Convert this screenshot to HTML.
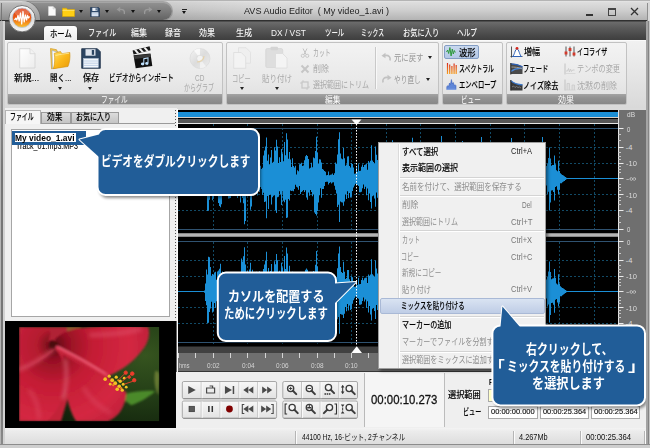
<!DOCTYPE html>
<html lang="ja">
<head>
<meta charset="utf-8">
<title>AVS Audio Editor</title>
<style>
*{box-sizing:border-box;margin:0;padding:0}
html,body{width:650px;height:448px;overflow:hidden;background:#cfcfcf}
body{font-family:"Liberation Sans","Noto Sans CJK JP",sans-serif;font-size:9px;color:#000;position:relative}
.t{position:absolute;white-space:pre;transform-origin:0 50%;display:block}
.a{position:absolute}
#win{position:absolute;left:0;top:0;width:650px;height:448px;background:#dadada;overflow:hidden}
#title{overflow:hidden;position:absolute;left:0;top:0;width:650px;height:21px;background:linear-gradient(90deg,rgba(0,0,0,.25),rgba(0,0,0,.2) 36px,rgba(0,0,0,.06) 175px,rgba(0,0,0,0) 260px),linear-gradient(#f0f0f0 0,#dedede 2px,#cfcfcf 10px,#b3b3b3 20px)}
#qat{position:absolute;left:24px;top:2px;width:148px;height:18px;border-radius:0 9px 9px 0;background:linear-gradient(#939393,#7e7e7e 45%,#626262);box-shadow:inset 0 1px 0 #a5a5a5,0 0 0 1px rgba(120,120,120,.5)}
#tabs{position:absolute;left:0;top:20px;width:650px;height:20px;background:linear-gradient(#303030 0,#303030 1px,#6c6c6c 2px,#5a5a5a 8px,#404040 19px)}
#hometab{position:absolute;left:44px;top:26px;width:33px;height:15px;background:linear-gradient(#fdfdfd,#ededed);border-radius:3px 3px 0 0;box-shadow:0 0 1px #222}
#ribbon{position:absolute;left:4px;top:40px;width:643px;height:68px;background:linear-gradient(#f1f1f1,#e3e3e3 60%,#d9d9d9);border-top:1px solid #fafafa}
.grp{position:absolute;top:42px;height:63px;border:1px solid #c2c2c2;border-radius:2px;background:linear-gradient(#f3f3f3,#e9e9e9 60%,#dedede);overflow:hidden}
.grp .lab{position:absolute;left:0;right:0;bottom:0;height:9.700px;background:linear-gradient(#a4a4a4,#929292 40%,#878787)}
.arr{position:absolute;width:0;height:0;border-left:2.5px solid transparent;border-right:2.5px solid transparent;border-top:3px solid #222}
</style>
</head>
<body>
<div id="win">
<div id="title"><div id="qat"></div><i class="a" style="left:4px;top:.5px;width:36px;height:36px;border-radius:50%;background:linear-gradient(#d0d0d0 0,#c0c0c0 3px,#9a9a9a 20px);box-shadow:0 0 0 .7px rgba(90,90,90,.5)"></i><i class="a" style="left:0;top:0;width:22px;height:21px;background:linear-gradient(#e6e6e6 0,#cfcfcf 2px,#bdbdbd 3px,#8c8c8c 20px)"></i></div>
<div id="tabs"></div>
<svg class="a" style="left:8px;top:4px" width="28" height="28" viewBox="0 0 28 28">
<defs><linearGradient id="lg1" x1="0" y1="0" x2="0" y2="1"><stop offset="0" stop-color="#dc3a14"/><stop offset=".5" stop-color="#ea5a14"/><stop offset=".8" stop-color="#f59a20"/><stop offset="1" stop-color="#fbc02c"/></linearGradient>
<linearGradient id="lg2" x1="0" y1="0" x2="0" y2="1"><stop offset="0" stop-color="#ffffff"/><stop offset=".5" stop-color="#dcdcdc"/><stop offset="1" stop-color="#f4f4f4"/></linearGradient></defs>
<circle cx="14.100" cy="14.700" r="13.200" fill="url(#lg2)" stroke="#666" stroke-width=".9"/>
<circle cx="14.050" cy="13.800" r="9.700" fill="url(#lg1)" stroke="#b4c6da" stroke-width=".8"/>
<ellipse cx="14" cy="8.500" rx="7.500" ry="4" fill="#fff" opacity=".2"/>
<path d="M6.500 16l1.300-1.800 1 1.800 1.200-4.500 1.200 5.500 1.300-8 1.200 11 1.300-12.500 1.200 10.500 1.200-7 1.200 5 1-4.500 1 2.500 1-1.500" fill="none" stroke="#fff" stroke-width="1.250" stroke-linejoin="round"/>
</svg>
<svg class="a" style="left:48px;top:6px" width="8" height="10" viewBox="0 0 8 10"><path d="M.5 .5h4.5l2.5 2.5v6.5h-7z" fill="#fbfbfb" stroke="#d8d8d8" stroke-width=".6"/><path d="M5 .5v2.5h2.5" fill="#e2e2e2" stroke="#ccc" stroke-width=".5"/></svg>
<svg class="a" style="left:62px;top:7px" width="13" height="10" viewBox="0 0 13 10"><path d="M.5 1.2h4l1 1.3h7v7h-12z" fill="#ffcf14" stroke="#d9a400" stroke-width=".6"/><path d="M.5 3.4h12" stroke="#ffe77a" stroke-width=".8"/></svg>
<svg class="a" style="left:90px;top:7px" width="10" height="10" viewBox="0 0 10 10"><path d="M.5 .5h8l1 1v8h-9z" fill="#2f4a6b" stroke="#1d3350" stroke-width=".6"/><rect x="2.3" y=".8" width="5" height="3.2" fill="#e9eef5"/><rect x="5.6" y="1.2" width="1.1" height="2.3" fill="#2f4a6b"/><rect x="1.6" y="5.3" width="6.8" height="4" fill="#eaf1fa"/><path d="M2 6.6h6M2 8h6" stroke="#9db6d6" stroke-width=".5"/></svg>
<i class="arr" style="left:79.0px;top:10.1px;border-top-color:#111"></i>
<i class="arr" style="left:105.0px;top:10.1px;border-top-color:#111"></i>
<i class="arr" style="left:131.0px;top:10.1px;border-top-color:#111"></i>
<i class="arr" style="left:157.2px;top:10.1px;border-top-color:#111"></i>
<svg class="a" style="left:116px;top:6px" width="10" height="9" viewBox="0 0 10 9"><path d="M8.300 8c.7-3.200-1-5-4.500-4.600" fill="none" stroke="#9a9a9a" stroke-width="1.400"/><path d="M.6 3.500l3.600-2.700v5.200z" fill="#9a9a9a"/></svg>
<svg class="a" style="left:143px;top:6px" width="10" height="9" viewBox="0 0 10 9"><path d="M1.700 8c-.7-3.200 1-5 4.500-4.600" fill="none" stroke="#9a9a9a" stroke-width="1.400"/><path d="M9.400 3.500l-3.600-2.700v5.200z" fill="#9a9a9a"/></svg>
<i class="a" style="left:182px;top:9px;width:5px;height:1px;background:#222"></i>
<i class="arr" style="left:182.0px;top:10.7px;border-top-color:#111"></i>
<span class="t" style="left:243.6px;top:5.3px;font-size:9.5px;line-height:12px;color:#1c1c1c;transform:scaleX(0.952);">AVS Audio Editor  ( My video_1.avi )</span>
<i class="a" style="left:586px;top:14px;width:7px;height:2px;background:#333"></i>
<i class="a" style="left:608px;top:8px;width:8px;height:8px;border:1px solid #444;border-top-width:2px"></i>
<svg class="a" style="left:630px;top:7px" width="9" height="9" viewBox="0 0 9 9"><path d="M1 1l7 7M8 1l-7 7" stroke="#333" stroke-width="1.3"/></svg>
<div id="hometab"></div>
<span class="t" style="left:49.5px;top:27.5px;font-size:9px;line-height:12px;color:#000;font-weight:500;transform:scaleX(0.815);-webkit-text-stroke:.1px #000;">ホーム</span>
<span class="t" style="left:88.2px;top:27.3px;font-size:9px;line-height:12px;color:#f4f4f4;font-weight:500;transform:scaleX(0.786);">ファイル</span>
<span class="t" style="left:131.0px;top:27.3px;font-size:9px;line-height:12px;color:#f4f4f4;font-weight:500;transform:scaleX(0.889);">編集</span>
<span class="t" style="left:165.0px;top:27.3px;font-size:9px;line-height:12px;color:#f4f4f4;font-weight:500;transform:scaleX(0.889);">録音</span>
<span class="t" style="left:199.0px;top:27.3px;font-size:9px;line-height:12px;color:#f4f4f4;font-weight:500;transform:scaleX(0.889);">効果</span>
<span class="t" style="left:235.8px;top:27.3px;font-size:9px;line-height:12px;color:#f4f4f4;font-weight:500;transform:scaleX(0.900);">生成</span>
<span class="t" style="left:271.0px;top:27.3px;font-size:9px;line-height:12px;color:#f4f4f4;font-weight:500;transform:scaleX(0.931);">DX / VST</span>
<span class="t" style="left:324.8px;top:27.3px;font-size:9px;line-height:12px;color:#f4f4f4;font-weight:500;transform:scaleX(0.711);">ツール</span>
<span class="t" style="left:361.4px;top:27.3px;font-size:9px;line-height:12px;color:#f4f4f4;font-weight:500;transform:scaleX(0.643);">ミックス</span>
<span class="t" style="left:402.5px;top:27.3px;font-size:9px;line-height:12px;color:#f4f4f4;font-weight:500;transform:scaleX(0.807);">お気に入り</span>
<span class="t" style="left:457.0px;top:27.3px;font-size:9px;line-height:12px;color:#f4f4f4;font-weight:500;transform:scaleX(0.741);">ヘルプ</span>
<div id="ribbon"></div>
<div class="grp" style="left:7px;width:216px"><div class="lab"></div></div>
<div class="grp" style="left:226px;width:213px"><div class="lab"></div></div>
<div class="grp" style="left:442px;width:61px"><div class="lab"></div></div>
<div class="grp" style="left:506px;width:121px"><div class="lab"></div></div>
<span class="t" style="left:101.3px;top:93.5px;font-size:9px;line-height:12px;color:#fff;transform:scaleX(0.743);">ファイル</span>
<span class="t" style="left:324.5px;top:93.5px;font-size:9px;line-height:12px;color:#fff;transform:scaleX(0.861);">編集</span>
<span class="t" style="left:461.3px;top:93.5px;font-size:9px;line-height:12px;color:#fff;transform:scaleX(0.731);">ビュー</span>
<span class="t" style="left:558.0px;top:93.5px;font-size:9px;line-height:12px;color:#fff;transform:scaleX(0.889);">効果</span>
<svg class="a" style="left:19px;top:48px" width="17" height="21" viewBox="0 0 17 21"><defs><linearGradient id="pg" x1="0" y1="0" x2="1" y2="1"><stop offset="0" stop-color="#fff"/><stop offset="1" stop-color="#ececec"/></linearGradient></defs>
<path d="M.7 .7h10.300l5 5v14.300h-15.300z" fill="url(#pg)" stroke="#d2d2d2" stroke-width=".8"/><path d="M11 .7v5h5" fill="#f2f2f2" stroke="#d2d2d2" stroke-width=".7"/></svg>
<span class="t" style="left:14.4px;top:71.8px;font-size:9px;line-height:12px;color:#000;font-weight:500;transform:scaleX(0.984);-webkit-text-stroke:.1px #000;">新規...</span>
<svg class="a" style="left:49px;top:47px" width="22" height="23" viewBox="0 0 22 23"><defs><linearGradient id="fo" x1="0" y1="0" x2="1" y2="1"><stop offset="0" stop-color="#ffe066"/><stop offset=".5" stop-color="#fbb81a"/><stop offset="1" stop-color="#e89a08"/></linearGradient></defs>
<path d="M1.500 1.500l6 1.200 1 2.300 3.500.8v14l-9.500 2z" fill="#f6c84a" stroke="#c98f10" stroke-width=".6"/>
<path d="M3 3.500l8 2.500v13.500l-7.500 1.800z" fill="#fdfdfd" stroke="#8da5c8" stroke-width=".6"/>
<path d="M5.200 6.300l6.300-1.800 1.300 2.200 8-1.200c.6 5-.3 10.500-1.800 14l-14.600 2.200c1.400-4.800 1.700-10.500.8-15.400z" fill="url(#fo)" stroke="#d08f0a" stroke-width=".6"/>
<path d="M6.500 8.500c5-1.200 9-1.800 13.500-2.200" stroke="#fff1a8" stroke-width=".9" fill="none" opacity=".8"/></svg>
<span class="t" style="left:49.5px;top:71.8px;font-size:9px;line-height:12px;color:#000;font-weight:500;transform:scaleX(0.840);-webkit-text-stroke:.1px #000;">開く...</span>
<i class="arr" style="left:57.8px;top:86.5px;border-top-color:#222"></i>
<svg class="a" style="left:81px;top:48px" width="20" height="21" viewBox="0 0 20 21"><path d="M.7 .7h15.600l3 3v16.600h-18.600z" fill="#2c4562" stroke="#1a2d45" stroke-width=".8"/>
<rect x="4.500" y="1.200" width="10" height="6.500" fill="#dfe5ee"/><rect x="10.800" y="2" width="2.300" height="4.800" fill="#2c4562"/>
<rect x="2.500" y="10.500" width="14.800" height="9" fill="#f3f7fc" stroke="#b9c9de" stroke-width=".5"/>
<path d="M3 13h14M3 15.200h14M3 17.400h14" stroke="#a9c0de" stroke-width=".7"/></svg>
<span class="t" style="left:82.5px;top:71.8px;font-size:9px;line-height:12px;color:#000;font-weight:500;transform:scaleX(0.900);-webkit-text-stroke:.1px #000;">保存</span>
<i class="arr" style="left:88.3px;top:86.5px;border-top-color:#222"></i>
<svg class="a" style="left:131px;top:46px" width="22" height="23" viewBox="0 0 22 23"><g transform="rotate(-14 4 8)"><rect x="2.500" y="4" width="17.500" height="4.200" fill="#1b1b1b"/><path d="M4 4l2.200 4.200h2.200l-2.200-4.200zM8.800 4l2.200 4.200h2.200l-2.200-4.200zM13.600 4l2.200 4.200h2.200l-2.200-4.200z" fill="#f4f4f4"/></g>
<path d="M2.500 9.200l17-1.800 1.800 12.600-16.600 2.300z" fill="#111"/>
<path d="M3 9.800l16.200-1.700.5 3-16.300 2z" fill="#3a3a3a"/>
<path d="M12.300 12.200l5.200-1v6.300a1.700 1.400 0 1 1-1-1.300v-3.600l-3.200.6v4.800a1.700 1.400 0 1 1-1-1.300z" fill="#bfe2ff"/></svg>
<span class="t" style="left:109.0px;top:71.8px;font-size:9px;line-height:12px;color:#000;font-weight:500;transform:scaleX(0.719);-webkit-text-stroke:.1px #000;">ビデオからインポート</span>
<svg class="a" style="left:189px;top:48px" width="22" height="21" viewBox="0 0 22 21"><defs><linearGradient id="cdg" x1="0" y1="0" x2="1" y2="1"><stop offset="0" stop-color="#f4f4f4"/><stop offset=".5" stop-color="#dcdcdc"/><stop offset="1" stop-color="#ededed"/></linearGradient></defs>
<circle cx="11" cy="10.500" r="10" fill="url(#cdg)" stroke="#d6d6d6" stroke-width=".6"/><path d="M11 10.500L5 2.500A10 10 0 0 1 11 .5z" fill="#fff" opacity=".7"/><path d="M11 10.500l6 8a10 10 0 0 1-6 2z" fill="#fff" opacity=".5"/>
<circle cx="11" cy="10.500" r="3.300" fill="#f3f3f3" stroke="#d2d2d2" stroke-width=".6"/><path d="M8 14c3 0 7-2 7-6" fill="none" stroke="#e6cfa0" stroke-width="1.200" opacity=".8"/></svg>
<span class="t" style="left:194.8px;top:71.8px;font-size:9px;line-height:12px;color:#a8a8a8;transform:scaleX(0.719);">CD</span>
<span class="t" style="left:184.0px;top:82.2px;font-size:9px;line-height:12px;color:#a8a8a8;transform:scaleX(0.667);">からグラブ</span>
<svg class="a" style="left:233px;top:47px" width="19" height="22" viewBox="0 0 19 22"><path d="M5.500 .7h7.500l4.500 4.500v11h-12z" fill="#efefef" stroke="#dcdcdc" stroke-width=".7"/><path d="M.7 5.500h7.500l4.500 4.500v11.300h-12z" fill="#f3f3f3" stroke="#dadada" stroke-width=".7"/></svg>
<span class="t" style="left:232.3px;top:72.8px;font-size:9px;line-height:12px;color:#a9a9a9;transform:scaleX(0.692);">コピー</span>
<i class="arr" style="left:239.5px;top:86.8px;border-top-color:#222"></i>
<svg class="a" style="left:265px;top:46px" width="23" height="23" viewBox="0 0 23 23"><rect x=".7" y="2.500" width="17" height="19" rx="1.500" fill="#dedede" stroke="#d2d2d2" stroke-width=".6"/><rect x="5.500" y=".7" width="7.500" height="3.500" rx="1" fill="#d4d4d4"/>
<path d="M10.500 7.500h7l4.500 4.500v10h-11.500z" fill="#f4f4f4" stroke="#dadada" stroke-width=".7"/></svg>
<span class="t" style="left:262.0px;top:72.8px;font-size:9px;line-height:12px;color:#a9a9a9;transform:scaleX(0.833);">貼り付け</span>
<i class="arr" style="left:275.1px;top:86.8px;border-top-color:#222"></i>
<svg class="a" style="left:300px;top:48px" width="10" height="10" viewBox="0 0 10 10"><path d="M3 .5l3 6M7 .5l-3 6" stroke="#c4c4c4" stroke-width="1"/><circle cx="2.800" cy="7.800" r="1.600" fill="none" stroke="#c4c4c4" stroke-width=".9"/><circle cx="7.200" cy="7.800" r="1.600" fill="none" stroke="#c4c4c4" stroke-width=".9"/></svg>
<svg class="a" style="left:300px;top:64px" width="10" height="10" viewBox="0 0 10 10"><path d="M1.500 1.500l7 7M8.500 1.500l-7 7" stroke="#c6c6c6" stroke-width="2"/></svg>
<svg class="a" style="left:300px;top:80px" width="10" height="10" viewBox="0 0 10 10"><rect x="2" y="2" width="6" height="6" fill="none" stroke="#c6c6c6" stroke-width="1.200"/><path d="M0 3h2M3 0v2M8 7h2M7 8v2" stroke="#c6c6c6" stroke-width=".8"/></svg>
<span class="t" style="left:313.0px;top:46.5px;font-size:9px;line-height:12px;color:#a8a8a8;transform:scaleX(0.654);">カット</span>
<span class="t" style="left:313.0px;top:63.0px;font-size:9px;line-height:12px;color:#a8a8a8;transform:scaleX(0.889);">削除</span>
<span class="t" style="left:313.0px;top:79.0px;font-size:9px;line-height:12px;color:#a8a8a8;transform:scaleX(0.778);">選択範囲にトリム</span>
<i class="a" style="left:375px;top:47px;width:1px;height:42px;background:#c9c9c9;box-shadow:1px 0 0 #f8f8f8"></i>
<svg class="a" style="left:381px;top:52px" width="11" height="10" viewBox="0 0 11 10"><path d="M9 8.500c.8-3.500-1.200-5.500-5-5" fill="none" stroke="#c2c2c2" stroke-width="1.700"/><path d="M.5 3.700l4-3v5.600z" fill="#c2c2c2"/></svg>
<svg class="a" style="left:381px;top:74px" width="11" height="10" viewBox="0 0 11 10"><path d="M2 8.500c-.8-3.500 1.200-5.500 5-5" fill="none" stroke="#c2c2c2" stroke-width="1.700"/><path d="M10.500 3.700l-4-3v5.600z" fill="#c2c2c2"/></svg>
<span class="t" style="left:393.7px;top:51.8px;font-size:9px;line-height:12px;color:#959595;transform:scaleX(0.819);">元に戻す</span>
<span class="t" style="left:393.7px;top:73.5px;font-size:9px;line-height:12px;color:#959595;transform:scaleX(0.744);">やり直し</span>
<i class="arr" style="left:428.2px;top:56.3px;border-top-color:#222"></i>
<i class="arr" style="left:425.5px;top:77.8px;border-top-color:#222"></i>
<i class="a" style="left:443.5px;top:44.500px;width:35px;height:14px;background:linear-gradient(#c9d8ee,#b4c8e6);border:1px solid #839dc4;border-radius:2px"></i>
<svg class="a" style="left:446px;top:46px" width="11" height="11" viewBox="0 0 11 11"><path d="M.5 6l1.200-2 1 3.500 1.200-6 1.200 8.500 1.200-7 1 5 1-3.500 1 2" fill="none" stroke="#2e9a3c" stroke-width="1"/></svg>
<svg class="a" style="left:446px;top:62px" width="11" height="13" viewBox="0 0 11 13"><defs><linearGradient id="spg" x1="0" y1="0" x2="0" y2="1"><stop offset="0" stop-color="#d8281c"/><stop offset="1" stop-color="#f7a01c"/></linearGradient></defs><path d="M1.500 1v11M3.700 2.500v9.500M5.900 4v8M8.100 1.500v10.500M10.200 3v9" stroke="url(#spg)" stroke-width="1.200"/></svg>
<svg class="a" style="left:446px;top:79px" width="11" height="11" viewBox="0 0 11 11"><path d="M.8 10.500v-3l1-.8.800.6.900-3.300.9 1.500 1-5 1 4.500.9-1.500 1 3 .9-.8.800 1v3.800z" fill="#5f86d8" stroke="#3158b8" stroke-width=".5"/><path d="M.8 10.300h9.400" stroke="#8fb0ee" stroke-width=".8"/></svg>
<span class="t" style="left:458.8px;top:46.5px;font-size:9px;line-height:12px;color:#000;font-weight:500;transform:scaleX(0.928);-webkit-text-stroke:.1px #000;">波形</span>
<span class="t" style="left:459.0px;top:62.7px;font-size:9px;line-height:12px;color:#000;font-weight:500;transform:scaleX(0.656);-webkit-text-stroke:.1px #000;">スペクトラル</span>
<span class="t" style="left:459.0px;top:79.0px;font-size:9px;line-height:12px;color:#000;font-weight:500;transform:scaleX(0.700);-webkit-text-stroke:.1px #000;">エンベロープ</span>
<svg class="a" style="left:510px;top:46px" width="13" height="12" viewBox="0 0 13 12"><path d="M1.500 .5v11M.5 10.500h12" stroke="#444" stroke-width=".9"/><path d="M2.500 10.500c2-1 2.500-7.500 4.500-7.500s2.500 6.500 4.500 7.500z" fill="#fff" stroke="#2f62b8" stroke-width="1"/><circle cx="7" cy="2.300" r="1.400" fill="#d8281c"/></svg>
<svg class="a" style="left:510px;top:62px" width="13" height="13" viewBox="0 0 13 13"><path d="M.8 1.500c4 0 8 1 11.700 3v7.500h-11.700z" fill="#4a4a4a"/><path d="M.8 1.800c4 0 8 1 11.700 3" stroke="#2f62b8" stroke-width="1.300" fill="none"/><path d="M.8 9.500c4-3 8-3.500 11.700-3" stroke="#4a86d8" stroke-width="1.300" fill="none"/><path d="M.8 5c4 0 8 .5 11.700 1.500" stroke="#9a9a9a" stroke-width="1" fill="none"/><path d="M.8 1v11.500" stroke="#222" stroke-width="1"/></svg>
<svg class="a" style="left:510px;top:79px" width="13" height="12" viewBox="0 0 13 12"><path d="M.8 1.500c3 2.500 7 4 11.700 4v6h-11.700z" fill="#3a3a3a"/><path d="M.8 1.800c3 2.500 7 4 11.700 4" stroke="#3a78cc" stroke-width="1.300" fill="none"/><path d="M2 8l1.500-1 1.500 1.500 1.500-1 1.500 1 1.500-.5 1.500 1" stroke="#888" stroke-width=".8" fill="none"/><path d="M.8 1v10.500" stroke="#222" stroke-width="1"/></svg>
<span class="t" style="left:523.8px;top:46.3px;font-size:9px;line-height:12px;color:#000;font-weight:500;transform:scaleX(0.900);-webkit-text-stroke:.1px #000;">増幅</span>
<span class="t" style="left:523.1px;top:62.7px;font-size:9px;line-height:12px;color:#000;font-weight:500;transform:scaleX(0.703);-webkit-text-stroke:.1px #000;">フェード</span>
<span class="t" style="left:523.0px;top:79.5px;font-size:9px;line-height:12px;color:#000;font-weight:500;transform:scaleX(0.789);-webkit-text-stroke:.1px #000;">ノイズ除去</span>
<svg class="a" style="left:564px;top:46px" width="12" height="11" viewBox="0 0 12 11"><path d="M2 .5v10M6 .5v10M10 .5v10" stroke="#444" stroke-width=".9"/><rect x=".6" y="5.500" width="2.800" height="3" fill="#d33a2c"/><rect x="4.600" y="2" width="2.800" height="3" fill="#d33a2c"/><rect x="8.600" y="6.500" width="2.800" height="3" fill="#d33a2c"/></svg>
<svg class="a" style="left:564px;top:63px" width="12" height="12" viewBox="0 0 12 12"><path d="M1 .5v11" stroke="#c2c2c2" stroke-width="1"/><path d="M2 8h1.500l1-2.500 1 3.500 1-3 1 2.500 1-1.500h2" fill="none" stroke="#c9c9c9" stroke-width=".9"/><path d="M1 10.500h10.500" stroke="#d4d4d4" stroke-width=".8"/></svg>
<svg class="a" style="left:564px;top:79px" width="12" height="12" viewBox="0 0 12 12"><path d="M1 .5v11" stroke="#c2c2c2" stroke-width="1"/><path d="M3 11v-6.500h2.500v6.500M8 11v-5h2.500v5" fill="#dedede" stroke="#c9c9c9" stroke-width=".7"/><path d="M1 11h10.500" stroke="#cfcfcf" stroke-width=".8"/></svg>
<span class="t" style="left:577.0px;top:46.3px;font-size:9px;line-height:12px;color:#000;font-weight:500;transform:scaleX(0.673);-webkit-text-stroke:.1px #000;">イコライザ</span>
<span class="t" style="left:577.0px;top:62.7px;font-size:9px;line-height:12px;color:#a8a8a8;transform:scaleX(0.796);">テンポの変更</span>
<span class="t" style="left:577.0px;top:79.5px;font-size:9px;line-height:12px;color:#a8a8a8;transform:scaleX(0.889);">沈黙の削除</span>
<i class="a" style="left:4px;top:108px;width:173px;height:322px;background:#f0f0f0"></i>
<i class="a" style="left:5px;top:122.500px;width:171px;height:1px;background:#9a9a9a"></i>
<i class="a" style="left:41px;top:111.500px;width:30px;height:11.500px;background:linear-gradient(#dcdcdc,#c4c4c4);border:1px solid #9a9a9a;border-bottom:0"></i>
<i class="a" style="left:71px;top:111.500px;width:48px;height:11.500px;background:linear-gradient(#dcdcdc,#c4c4c4);border:1px solid #9a9a9a;border-bottom:0"></i>
<i class="a" style="left:5px;top:110px;width:36px;height:14px;background:#f6f6f6;border:1px solid #b4b4b4;border-bottom:0"></i>
<span class="t" style="left:9.8px;top:110.5px;font-size:9px;line-height:12px;color:#000;font-weight:500;transform:scaleX(0.657);-webkit-text-stroke:.1px #000;">ファイル</span>
<span class="t" style="left:47.3px;top:110.8px;font-size:9px;line-height:12px;color:#000;font-weight:500;transform:scaleX(0.861);-webkit-text-stroke:.1px #000;">効果</span>
<span class="t" style="left:75.9px;top:110.8px;font-size:9px;line-height:12px;color:#000;font-weight:500;transform:scaleX(0.775);-webkit-text-stroke:.1px #000;">お気に入り</span>
<i class="a" style="left:11px;top:128.500px;width:158.500px;height:188px;background:#fff;border:1px solid #a6a6a6"></i>
<i class="a" style="left:11.500px;top:130.500px;width:74px;height:14.500px;background:#215d98"></i>
<i class="a" style="left:14.600px;top:133.300px;width:61.500px;height:9px;background:#fff"></i>
<div class="a" style="left:12px;top:145.200px;width:80px;height:6px;overflow:hidden"><span class="t" style="left:4.0px;top:-5.4px;font-size:9px;line-height:12px;color:#000;font-weight:500;transform:scaleX(0.793);-webkit-text-stroke:.1px #000;">Track_01.mp3.MP3</span></div>
<span class="t" style="left:14.7px;top:131.8px;font-size:9.5px;line-height:12px;color:#000;font-weight:700;transform:scaleX(0.888);">My video_1.avi</span>
<i class="a" style="left:4px;top:320.500px;width:171.500px;height:107px;background:#000"></i>
<svg class="a" style="left:19.400px;top:327.400px" width="140.300" height="94.300" viewBox="0 0 140 94" preserveAspectRatio="none">
<defs>
<radialGradient id="bgG" cx=".9" cy=".3" r=".9"><stop offset="0" stop-color="#36541f"/><stop offset=".45" stop-color="#243f17"/><stop offset="1" stop-color="#10200b"/></radialGradient>
<radialGradient id="pet" gradientUnits="userSpaceOnUse" cx="34" cy="18" r="95"><stop offset="0" stop-color="#560812"/><stop offset=".16" stop-color="#961024"/><stop offset=".42" stop-color="#c41c34"/><stop offset=".8" stop-color="#d42842"/><stop offset="1" stop-color="#c2203a"/></radialGradient>
<radialGradient id="pet2" gradientUnits="userSpaceOnUse" cx="34" cy="18" r="80"><stop offset="0" stop-color="#620a14"/><stop offset=".2" stop-color="#b41a2e"/><stop offset=".6" stop-color="#cc2440"/><stop offset="1" stop-color="#c6203a"/></radialGradient>
<filter id="bl" x="-5%" y="-5%" width="110%" height="110%"><feGaussianBlur stdDeviation=".8"/></filter><filter id="bl2"><feGaussianBlur stdDeviation="2.200"/></filter><filter id="bl3"><feGaussianBlur stdDeviation=".5"/></filter>
<clipPath id="fc"><rect width="140" height="94"/></clipPath>
</defs>
<g clip-path="url(#fc)">
<rect width="140" height="94" fill="url(#bgG)"/>
<g filter="url(#bl)">
<path d="M108 66c9-2 20-3 28-2-6 5-13 10-24 14l-8-6z" fill="#4c8a2a"/>
<path d="M136 44c3-1 5 2 4 10l-1 14c-3-6-5-16-3-24z" fill="#7a8a3a" opacity=".75"/>
<path d="M0 0h60l-10 14 40 36 16 16-10 22-8 6h-30l-6-34-10 34h-42z" fill="#c22038"/><path d="M28 0h32l-6 10-20 10z" fill="#b02034"/>
<path d="M48 0h14c-3 3-8 6-14 7z" fill="#8a7a30" opacity=".7"/>
<path d="M36 12c6-6 14-9 24-11 20-2 48-3 69-1 2 8 0 16-6 23-6 8-14 16-26 22-4 2-8 4-12 5-10-6-26-16-44-27z" fill="url(#pet)"/>
<path d="M0 0h30c2 5 1 11-1 15 3 2 5 4 6 7-10 8-22 15-35 21z" fill="url(#pet2)"/>
<path d="M0 44c13-5 25-12 36-22 5 5 9 12 10 22 1 12-1 24-6 34-3 6-7 11-12 16h-28z" fill="url(#pet)"/>
<path d="M44 28c14 8 28 16 42 23 6 3 14 8 21 14 0 8-3 16-8 22-3 3-6 5-10 7h-32c-4-6-7-14-9-24-2-14-4-28-4-42z" fill="url(#pet)"/>
<path d="M30 14c4-2 8 0 10 4-2 4-6 5-10 3z" fill="#4a0810"/>
<path d="M38 20c16 8 34 18 50 28" stroke="#e0405a" stroke-width="3.200" fill="none" stroke-linecap="round"/>
<path d="M40 20c14 7 30 16 46 26" stroke="#f07088" stroke-width="1" fill="none" opacity=".7"/>
</g>
<g filter="url(#bl2)" opacity=".55">
<path d="M0 43c12-5 24-12 35-21" stroke="#e8788c" stroke-width="3" fill="none"/>
<path d="M46 32c2 12 2 26-2 40" stroke="#e88a9a" stroke-width="3" fill="none"/>
<path d="M70 8c18 0 36-2 52-6" stroke="#e05a72" stroke-width="4" fill="none"/>
<path d="M10 62c6 8 10 18 10 30" stroke="#dc4a62" stroke-width="4" fill="none"/>
<path d="M64 60c6 10 16 20 28 26" stroke="#dc4a62" stroke-width="4" fill="none"/>
</g>
<g filter="url(#bl3)">
<g fill="#f4c224"><circle cx="86" cy="52" r="1.800"/><circle cx="90" cy="49" r="1.600"/><circle cx="93" cy="53" r="1.900"/><circle cx="97" cy="50" r="1.600"/><circle cx="96" cy="56" r="1.900"/><circle cx="101" cy="54" r="1.700"/><circle cx="100" cy="59" r="1.800"/><circle cx="104" cy="57" r="1.500"/><circle cx="98" cy="62" r="1.800"/><circle cx="103" cy="63" r="1.600"/><circle cx="107" cy="60" r="1.400"/><circle cx="91" cy="57" r="1.400"/><circle cx="105" cy="51" r="1.400"/></g>
<g fill="#f08a1c"><circle cx="94" cy="58" r="1.100"/><circle cx="102" cy="61" r="1.100"/><circle cx="99" cy="53" r="1"/></g>
<g stroke="#e8402c" stroke-width=".9" fill="#ee3a2a"><path d="M100 52l6-6M103 54l9-7M105 57l9-3" fill="none"/><circle cx="106.500" cy="45.500" r="1.700"/><circle cx="113" cy="46.500" r="1.800"/><circle cx="115" cy="53" r="1.700"/><circle cx="110" cy="50" r="1.200"/></g>
</g>
</g>
</svg>
<i class="a" style="left:178px;top:109.500px;width:468px;height:263px;background:#000"></i>
<i class="a" style="left:176.500px;top:109px;width:1.500px;height:320px;background:#fbfbfb"></i>
<i class="a" style="left:175px;top:110px;width:1px;height:210px;background:repeating-linear-gradient(#555 0,#555 1px,#eee 1px,#eee 3px)"></i>
<i class="a" style="left:175.500px;top:320.500px;width:1px;height:108px;background:#666"></i>
<i class="a" style="left:178px;top:112px;width:440px;height:5.500px;background:#1b8fd6"></i>
<i class="a" style="left:178px;top:117.300px;width:440px;height:1px;background:#d6cec6"></i>
<i class="a" style="left:178px;top:118.500px;width:440px;height:4.300px;background:#565656"></i>
<i class="a" style="left:178px;top:122.800px;width:440px;height:1px;background:#e6e6e6"></i>
<i class="a" style="left:618px;top:109.500px;width:28px;height:245px;background:#6f6f6f"></i>
<i class="a" style="left:618px;top:110px;width:1px;height:244px;background:#e4e4e4"></i>
<svg class="a" style="left:0;top:0" width="650" height="448" viewBox="0 0 650 448"><path d="M213.5 124V229M213.5 242V345" stroke="#124a66" stroke-width="1" stroke-dasharray="2 2"/><path d="M247.5 124V229M247.5 242V345" stroke="#124a66" stroke-width="1" stroke-dasharray="2 2"/><path d="M282.5 124V229M282.5 242V345" stroke="#124a66" stroke-width="1" stroke-dasharray="2 2"/><path d="M317.5 124V229M317.5 242V345" stroke="#124a66" stroke-width="1" stroke-dasharray="2 2"/><path d="M351.5 124V229M351.5 242V345" stroke="#124a66" stroke-width="1" stroke-dasharray="2 2"/><path d="M386.5 124V229M386.5 242V345" stroke="#124a66" stroke-width="1" stroke-dasharray="2 2"/><path d="M420.5 124V229M420.5 242V345" stroke="#124a66" stroke-width="1" stroke-dasharray="2 2"/><path d="M455.5 124V229M455.5 242V345" stroke="#124a66" stroke-width="1" stroke-dasharray="2 2"/><path d="M490.5 124V229M490.5 242V345" stroke="#124a66" stroke-width="1" stroke-dasharray="2 2"/><path d="M524.5 124V229M524.5 242V345" stroke="#124a66" stroke-width="1" stroke-dasharray="2 2"/><path d="M559.5 124V229M559.5 242V345" stroke="#124a66" stroke-width="1" stroke-dasharray="2 2"/><path d="M594.5 124V229M594.5 242V345" stroke="#124a66" stroke-width="1" stroke-dasharray="2 2"/><path d="M178 128.5H618" stroke="#2f5270" stroke-width="1"/><path d="M178 229.5H618" stroke="#2f5270" stroke-width="1"/><path d="M178 147.5H618" stroke="#124a66" stroke-width="1" stroke-dasharray="2 2"/><path d="M178 163.5H618" stroke="#124a66" stroke-width="1" stroke-dasharray="2 2"/><path d="M178 194.5H618" stroke="#124a66" stroke-width="1" stroke-dasharray="2 2"/><path d="M178 210.5H618" stroke="#124a66" stroke-width="1" stroke-dasharray="2 2"/><path d="M178 178.5H618" stroke="#1b8fd6" stroke-width="1"/><path d="M178 241.5H618" stroke="#2f5270" stroke-width="1"/><path d="M178 342.5H618" stroke="#2f5270" stroke-width="1"/><path d="M178 260.5H618" stroke="#124a66" stroke-width="1" stroke-dasharray="2 2"/><path d="M178 276.5H618" stroke="#124a66" stroke-width="1" stroke-dasharray="2 2"/><path d="M178 307.5H618" stroke="#124a66" stroke-width="1" stroke-dasharray="2 2"/><path d="M178 323.5H618" stroke="#124a66" stroke-width="1" stroke-dasharray="2 2"/><path d="M178 291.5H618" stroke="#1b8fd6" stroke-width="1"/><path d="M204,178.5V177.4h1V170.3h1V155.8h1V161.1h1V142.8h1V143.1h1V153.2h1V162.2h1V160.4h1V161.4h1V158.9h1V158.2h1V166.5h1V158.0h1V156.8h1V155.0h1V150.0h1V161.6h1V157.8h1V170.4h1V160.9h1V164.1h1V164.7h1V166.1h1V163.2h1V162.2h1V160.7h1V165.0h1V164.7h1V165.0h1V165.1h1V161.8h1V167.8h1V160.6h1V169.5h1V165.4h1V162.4h1V144.4h1V147.6h1V142.3h1V132.9h1V150.5h1V158.1h1V157.4h1V163.8h1V155.7h1V149.0h1V162.4h1V156.0h1V167.4h1V166.8h1V165.7h1V158.2h1V165.2h1V167.2h1V157.5h1V165.8h1V169.1h1V167.7h1V155.4h1V150.6h1V146.6h1V137.5h1V160.7h1V154.4h1V164.2h1V157.5h1V150.0h1V162.7h1V161.7h1V147.3h1V150.4h1V139.8h1V146.4h1V163.1h1V157.2h1V162.0h1V148.9h1V153.8h1V161.3h1V142.0h1V155.2h1V133.3h1V139.5h1V158.8h1V152.0h1V159.6h1V167.0h1V158.2h1V166.1h1V167.6h1V165.8h1V174.5h1V170.2h1V171.3h1V164.2h1V163.8h1V162.7h1V165.9h1V165.6h1V160.3h1V156.2h1V154.9h1V156.1h1V158.9h1V168.4h1V167.7h1V162.8h1V167.2h1V157.5h1V158.2h1V150.9h1V136.8h1V152.7h1V164.0h1V159.3h1V159.4h1V162.6h1V169.1h1V169.7h1V171.1h1V171.8h1V175.2h1V175.1h1V171.5h1V175.2h1V174.7h1V174.5h1V173.6h1V175.0h1V173.2h1V162.6h1V163.8h1V154.6h1V139.3h1V132.2h1V153.4h1V158.4h1V159.3h1V147.9h1V158.2h1V165.7h1V164.6h1V156.5h1V156.2h1V165.9h1V167.5h1V163.1h1V163.9h1V167.6h1V173.7h1V173.4h1V167.7h1V171.7h1V164.3h1V171.1h1V170.8h1V166.8h1V164.4h1V166.9h1V164.9h1V164.4h1V163.9h1V169.7h1V160.9h1V162.4h1V160.8h1V145.2h1V160.6h1V161.9h1V163.5h1V146.6h1V154.7h1V159.9h1V161.7h1V162.8h1V154.3h1V166.2h1V155.0h1V164.9h1V169.2h1V171.1h1V169.2h1V161.0h1V163.0h1V158.1h1V151.9h1V158.2h1V140.2h1V159.7h1V159.7h1V164.6h1V164.1h1V164.9h1V158.3h1V163.3h1V157.0h1V159.9h1V164.9h1V168.5h1V165.8h1V166.1h1V173.0h1V170.5h1V156.5h1V161.1h1V156.4h1V143.5h1V137.7h1V156.8h1V155.4h1V167.2h1V165.7h1V166.6h1V153.8h1V161.1h1V164.7h1V166.5h1V156.4h1V158.1h1V163.5h1V170.4h1V169.1h1V169.5h1V157.2h1V161.4h1V160.2h1V154.9h1V149.5h1V157.4h1V165.8h1V162.4h1V162.1h1V164.3h1V154.0h1V147.3h1V153.4h1V135.9h1V144.1h1V150.5h1V165.0h1V163.1h1V165.9h1V160.5h1V165.6h1V162.4h1V164.9h1V167.4h1V168.2h1V162.3h1V170.2h1V170.2h1V164.6h1V163.3h1V162.4h1V157.0h1V160.3h1V146.7h1V141.1h1V143.2h1V156.5h1V158.6h1V161.9h1V158.5h1V161.0h1V166.6h1V159.1h1V162.2h1V167.4h1V169.8h1V167.6h1V171.0h1V163.6h1V157.8h1V163.1h1V157.7h1V149.2h1V136.9h1V147.3h1V148.7h1V155.1h1V165.0h1V161.8h1V159.0h1V159.5h1V167.1h1V167.2h1V167.1h1V161.7h1V166.8h1V169.4h1V167.2h1V171.4h1V163.2h1V164.5h1V158.0h1V163.6h1V150.0h1V146.0h1V162.1h1V161.3h1V167.2h1V169.0h1V167.1h1V158.1h1V147.1h1V152.6h1V137.9h1V158.0h1V157.6h1V160.8h1V170.5h1V163.0h1V160.2h1V156.1h1V166.0h1V157.8h1V165.4h1V161.9h1V164.9h1V170.8h1V171.0h1V169.0h1V154.3h1V147.9h1V149.2h1V143.7h1V144.5h1V145.1h1V161.9h1V166.1h1V167.1h1V162.5h1V160.3h1V154.3h1V150.0h1V149.9h1V142.0h1V137.1h1V149.9h1V160.2h1V171.0h1V166.1h1V163.6h1V157.9h1V147.5h1V158.5h1V165.8h1V165.0h1V164.9h1V155.4h1V164.2h1V170.2h1V171.2h1V160.7h1V170.9h1V173.2h1V174.2h1V174.9h1V175.5h1V176.2h1V177.0h1V177.8h1V177.9h1V177.9h1V177.9h1V178.5V179.1h-1V179.1h-1V179.1h-1V179.2h-1V179.9h-1V180.9h-1V181.6h-1V182.3h-1V183.3h-1V183.3h-1V189.7h-1V193.9h-1V189.7h-1V186.2h-1V186.9h-1V200.5h-1V192.1h-1V190.2h-1V190.4h-1V202.6h-1V210.5h-1V191.8h-1V194.1h-1V185.6h-1V184.1h-1V191.7h-1V203.5h-1V215.2h-1V205.3h-1V203.9h-1V195.0h-1V196.6h-1V196.1h-1V186.5h-1V193.6h-1V193.2h-1V205.1h-1V194.2h-1V211.7h-1V194.6h-1V210.0h-1V197.3h-1V191.1h-1V193.3h-1V185.3h-1V186.2h-1V187.2h-1V199.4h-1V189.2h-1V195.4h-1V190.8h-1V190.7h-1V191.6h-1V188.5h-1V186.0h-1V191.9h-1V194.3h-1V197.0h-1V222.2h-1V203.5h-1V196.7h-1V197.6h-1V189.4h-1V190.5h-1V189.8h-1V192.4h-1V194.0h-1V207.0h-1V194.5h-1V194.4h-1V192.9h-1V194.2h-1V189.2h-1V191.5h-1V186.4h-1V188.6h-1V192.5h-1V192.5h-1V193.0h-1V190.2h-1V189.3h-1V192.8h-1V191.3h-1V196.6h-1V187.6h-1V197.2h-1V201.3h-1V197.4h-1V221.4h-1V219.3h-1V196.9h-1V196.8h-1V195.7h-1V186.1h-1V189.0h-1V187.3h-1V190.2h-1V192.8h-1V193.4h-1V194.6h-1V199.4h-1V197.6h-1V192.2h-1V189.8h-1V205.0h-1V200.4h-1V198.9h-1V215.7h-1V195.5h-1V196.8h-1V200.1h-1V191.8h-1V188.7h-1V191.2h-1V189.3h-1V186.6h-1V193.5h-1V188.5h-1V190.4h-1V199.2h-1V197.8h-1V191.8h-1V190.4h-1V188.3h-1V186.1h-1V192.9h-1V197.7h-1V205.9h-1V221.9h-1V200.5h-1V203.9h-1V201.3h-1V198.1h-1V186.5h-1V188.5h-1V201.5h-1V198.7h-1V203.6h-1V200.6h-1V194.2h-1V190.4h-1V194.3h-1V192.0h-1V189.0h-1V189.5h-1V192.9h-1V190.3h-1V189.3h-1V201.0h-1V197.4h-1V190.6h-1V192.8h-1V194.4h-1V191.5h-1V191.7h-1V203.0h-1V200.7h-1V221.0h-1V198.5h-1V202.0h-1V207.6h-1V200.6h-1V190.7h-1V184.1h-1V185.4h-1V194.5h-1V193.4h-1V189.3h-1V200.7h-1V192.2h-1V196.9h-1V193.8h-1V197.0h-1V194.1h-1V206.7h-1V206.1h-1V199.5h-1V213.6h-1V196.4h-1V198.0h-1V208.1h-1V200.3h-1V200.1h-1V186.9h-1V188.5h-1V188.1h-1V195.5h-1V194.2h-1V198.9h-1V190.8h-1V196.2h-1V192.6h-1V197.7h-1V192.4h-1V206.7h-1V198.4h-1V195.5h-1V196.3h-1V208.4h-1V202.1h-1V193.5h-1V200.3h-1V188.6h-1V195.2h-1V186.8h-1V188.9h-1V184.6h-1V188.2h-1V191.7h-1V192.2h-1V192.2h-1V186.0h-1V185.1h-1V184.3h-1V183.7h-1V185.4h-1V187.6h-1V191.1h-1V196.8h-1V197.6h-1V193.0h-1V198.1h-1V191.3h-1V198.9h-1V194.5h-1V201.4h-1V205.7h-1V202.4h-1V202.2h-1V201.6h-1V222.0h-1V204.8h-1V207.1h-1V193.6h-1V189.8h-1V185.8h-1V182.3h-1V182.4h-1V183.5h-1V182.2h-1V182.9h-1V184.6h-1V181.7h-1V181.8h-1V182.1h-1V186.0h-1V189.1h-1V188.9h-1V197.7h-1V188.3h-1V195.3h-1V202.6h-1V211.1h-1V215.4h-1V214.1h-1V212.4h-1V194.4h-1V196.2h-1V191.9h-1V190.0h-1V195.7h-1V192.6h-1V199.7h-1V197.4h-1V190.2h-1V192.0h-1V189.9h-1V191.3h-1V191.9h-1V194.0h-1V185.9h-1V189.8h-1V187.4h-1V186.8h-1V184.8h-1V188.9h-1V191.3h-1V190.8h-1V191.0h-1V190.5h-1V200.5h-1V199.0h-1V217.5h-1V217.9h-1V199.7h-1V202.2h-1V200.7h-1V191.6h-1V205.1h-1V194.6h-1V191.2h-1V196.8h-1V197.3h-1V213.1h-1V210.3h-1V195.3h-1V195.8h-1V197.3h-1V204.4h-1V194.5h-1V195.0h-1V208.9h-1V195.9h-1V218.3h-1V201.5h-1V201.9h-1V192.8h-1V194.8h-1V189.1h-1V186.9h-1V191.9h-1V190.0h-1V195.4h-1V191.7h-1V191.6h-1V189.3h-1V189.8h-1V192.0h-1V206.5h-1V209.7h-1V193.6h-1V195.4h-1V191.9h-1V195.5h-1V221.1h-1V224.3h-1V203.2h-1V197.9h-1V195.3h-1V202.5h-1V188.9h-1V194.2h-1V198.1h-1V187.5h-1V191.2h-1V186.9h-1V188.1h-1V193.2h-1V187.0h-1V198.0h-1V198.3h-1V198.5h-1V193.4h-1V190.5h-1V189.0h-1V189.0h-1V186.7h-1V188.9h-1V204.2h-1V207.3h-1V206.1h-1V202.9h-1V192.3h-1V188.5h-1V195.3h-1V190.3h-1V198.8h-1V200.3h-1V189.0h-1V196.1h-1V199.7h-1V210.7h-1V210.9h-1V192.7h-1V188.4h-1V179.9h-1z" fill="#1b8fd6"/><path d="M204,291.5V290.4h1V283.5h1V269.5h1V274.6h1V256.8h1V257.2h1V267.0h1V275.7h1V274.0h1V274.9h1V272.5h1V271.8h1V279.8h1V271.6h1V270.4h1V268.7h1V263.8h1V275.1h1V271.4h1V283.7h1V274.4h1V277.5h1V278.1h1V279.5h1V276.6h1V275.7h1V274.2h1V278.4h1V278.1h1V278.4h1V278.5h1V275.3h1V281.1h1V274.2h1V282.8h1V278.8h1V275.9h1V258.5h1V261.5h1V256.3h1V247.3h1V264.4h1V271.7h1V271.0h1V277.2h1V269.4h1V262.8h1V275.9h1V269.7h1V280.8h1V280.2h1V279.1h1V271.8h1V278.6h1V280.5h1V271.2h1V279.2h1V282.3h1V281.1h1V269.1h1V264.4h1V260.6h1V251.7h1V274.3h1V268.1h1V277.6h1V271.1h1V263.9h1V276.2h1V275.2h1V261.2h1V264.3h1V253.9h1V260.3h1V276.5h1V270.8h1V275.5h1V262.8h1V267.6h1V274.8h1V256.1h1V268.9h1V247.6h1V253.6h1V272.4h1V265.8h1V273.2h1V280.3h1V271.8h1V279.5h1V281.0h1V279.2h1V287.6h1V283.4h1V284.5h1V277.6h1V277.3h1V276.2h1V279.3h1V279.0h1V273.9h1V269.8h1V268.6h1V269.8h1V272.5h1V281.7h1V281.0h1V276.3h1V280.6h1V271.1h1V271.8h1V264.7h1V251.0h1V266.4h1V277.5h1V272.9h1V273.0h1V276.1h1V282.4h1V283.0h1V284.4h1V285.0h1V288.3h1V288.2h1V284.7h1V288.3h1V287.8h1V287.7h1V286.8h1V288.1h1V286.3h1V276.1h1V277.2h1V268.3h1V253.5h1V246.6h1V267.1h1V272.0h1V272.9h1V261.8h1V271.8h1V279.1h1V278.0h1V270.1h1V269.9h1V279.3h1V280.9h1V276.6h1V277.3h1V280.9h1V286.8h1V286.5h1V281.0h1V284.9h1V277.7h1V284.3h1V284.1h1V280.1h1V277.8h1V280.3h1V278.3h1V277.8h1V277.4h1V282.9h1V274.5h1V275.8h1V274.4h1V259.2h1V274.2h1V275.4h1V276.9h1V260.5h1V268.4h1V273.5h1V275.2h1V276.2h1V268.1h1V279.6h1V268.8h1V278.3h1V282.5h1V284.3h1V282.5h1V274.5h1V276.4h1V271.8h1V265.7h1V271.8h1V254.3h1V273.3h1V273.2h1V278.0h1V277.5h1V278.3h1V271.9h1V276.8h1V270.6h1V273.4h1V278.3h1V281.8h1V279.2h1V279.5h1V286.2h1V283.7h1V270.2h1V274.7h1V270.1h1V257.6h1V251.9h1V270.4h1V269.1h1V280.6h1V279.1h1V280.0h1V267.5h1V274.6h1V278.1h1V279.8h1V270.1h1V271.7h1V276.9h1V283.7h1V282.4h1V282.8h1V270.9h1V274.9h1V273.7h1V268.6h1V263.4h1V271.0h1V279.2h1V275.9h1V275.6h1V277.7h1V267.7h1V261.3h1V267.2h1V250.2h1V258.1h1V264.4h1V278.4h1V276.6h1V279.3h1V274.1h1V278.9h1V275.9h1V278.3h1V280.7h1V281.5h1V275.8h1V283.4h1V283.5h1V278.0h1V276.8h1V275.9h1V270.7h1V273.8h1V260.7h1V255.2h1V257.3h1V270.2h1V272.2h1V275.4h1V272.1h1V274.5h1V279.9h1V272.6h1V275.7h1V280.7h1V283.1h1V280.9h1V284.2h1V277.0h1V271.4h1V276.5h1V271.4h1V263.1h1V251.1h1V261.3h1V262.6h1V268.8h1V278.4h1V275.3h1V272.5h1V273.0h1V280.4h1V280.6h1V280.4h1V275.2h1V280.2h1V282.7h1V280.5h1V284.6h1V276.7h1V277.9h1V271.7h1V277.1h1V263.9h1V259.9h1V275.6h1V274.9h1V280.6h1V282.3h1V280.4h1V271.7h1V261.0h1V266.4h1V252.1h1V271.6h1V271.2h1V274.4h1V283.7h1V276.5h1V273.8h1V269.8h1V279.4h1V271.4h1V278.8h1V275.4h1V278.3h1V284.0h1V284.2h1V282.3h1V268.1h1V261.8h1V263.1h1V257.8h1V258.5h1V259.1h1V275.4h1V279.5h1V280.4h1V276.0h1V273.8h1V268.0h1V263.9h1V263.8h1V256.1h1V251.3h1V263.7h1V273.7h1V284.2h1V279.5h1V277.1h1V271.5h1V261.4h1V272.1h1V279.2h1V278.4h1V278.3h1V269.1h1V277.7h1V283.4h1V284.4h1V274.2h1V284.1h1V286.3h1V287.3h1V288.0h1V288.6h1V289.3h1V290.0h1V290.8h1V290.9h1V290.9h1V290.9h1V291.5V292.1h-1V292.1h-1V292.1h-1V292.2h-1V292.9h-1V293.8h-1V294.5h-1V295.2h-1V296.2h-1V296.2h-1V302.3h-1V306.4h-1V302.4h-1V299.0h-1V299.7h-1V312.8h-1V304.7h-1V302.8h-1V303.0h-1V314.9h-1V322.5h-1V304.4h-1V306.6h-1V298.4h-1V296.9h-1V304.3h-1V315.7h-1V327.1h-1V317.5h-1V316.1h-1V307.6h-1V309.0h-1V308.6h-1V299.3h-1V306.2h-1V305.7h-1V317.3h-1V306.7h-1V323.7h-1V307.1h-1V322.1h-1V309.8h-1V303.7h-1V305.8h-1V298.1h-1V298.9h-1V299.9h-1V311.8h-1V301.8h-1V307.9h-1V303.4h-1V303.4h-1V304.2h-1V301.2h-1V298.8h-1V304.5h-1V306.9h-1V309.4h-1V333.9h-1V315.7h-1V309.1h-1V310.0h-1V302.1h-1V303.1h-1V302.5h-1V304.9h-1V306.5h-1V319.2h-1V307.0h-1V306.9h-1V305.5h-1V306.7h-1V301.9h-1V304.1h-1V299.2h-1V301.3h-1V305.0h-1V305.1h-1V305.6h-1V302.8h-1V302.0h-1V305.4h-1V303.9h-1V309.1h-1V300.3h-1V309.6h-1V313.6h-1V309.8h-1V333.1h-1V331.0h-1V309.3h-1V309.3h-1V308.1h-1V298.8h-1V301.7h-1V300.0h-1V302.8h-1V305.3h-1V306.0h-1V307.1h-1V311.7h-1V310.0h-1V304.8h-1V302.5h-1V317.2h-1V312.8h-1V311.3h-1V327.6h-1V308.0h-1V309.2h-1V312.5h-1V304.4h-1V301.4h-1V303.8h-1V302.0h-1V299.4h-1V306.1h-1V301.2h-1V303.1h-1V311.6h-1V310.2h-1V304.4h-1V303.1h-1V301.0h-1V298.9h-1V305.5h-1V310.1h-1V318.1h-1V333.6h-1V312.8h-1V316.1h-1V313.7h-1V310.5h-1V299.3h-1V301.2h-1V313.8h-1V311.1h-1V315.8h-1V312.9h-1V306.7h-1V303.0h-1V306.9h-1V304.6h-1V301.7h-1V302.2h-1V305.5h-1V302.9h-1V302.0h-1V313.4h-1V309.9h-1V303.2h-1V305.4h-1V306.9h-1V304.1h-1V304.3h-1V315.2h-1V313.0h-1V332.8h-1V310.9h-1V314.3h-1V319.8h-1V313.0h-1V303.3h-1V296.9h-1V298.2h-1V307.0h-1V305.9h-1V302.0h-1V313.1h-1V304.8h-1V309.4h-1V306.4h-1V309.4h-1V306.6h-1V318.9h-1V318.2h-1V311.9h-1V325.5h-1V308.8h-1V310.4h-1V320.2h-1V312.6h-1V312.4h-1V299.7h-1V301.2h-1V300.8h-1V308.0h-1V306.8h-1V311.3h-1V303.4h-1V308.7h-1V305.2h-1V310.1h-1V305.0h-1V318.9h-1V310.9h-1V308.0h-1V308.7h-1V320.5h-1V314.4h-1V306.0h-1V312.6h-1V301.3h-1V307.7h-1V299.5h-1V301.6h-1V297.4h-1V300.9h-1V304.3h-1V304.8h-1V304.8h-1V298.7h-1V297.9h-1V297.2h-1V296.6h-1V298.2h-1V300.3h-1V303.7h-1V309.3h-1V310.0h-1V305.6h-1V310.5h-1V303.9h-1V311.3h-1V307.0h-1V313.7h-1V317.9h-1V314.7h-1V314.5h-1V314.0h-1V333.7h-1V317.0h-1V319.2h-1V306.1h-1V302.5h-1V298.6h-1V295.2h-1V295.3h-1V296.4h-1V295.1h-1V295.8h-1V297.4h-1V294.6h-1V294.7h-1V295.0h-1V298.7h-1V301.8h-1V301.5h-1V310.1h-1V301.0h-1V307.8h-1V314.8h-1V323.1h-1V327.3h-1V326.0h-1V324.4h-1V307.0h-1V308.7h-1V304.5h-1V302.7h-1V308.2h-1V305.2h-1V312.1h-1V309.8h-1V302.8h-1V304.6h-1V302.6h-1V303.9h-1V304.5h-1V306.5h-1V298.7h-1V302.4h-1V300.1h-1V299.5h-1V297.6h-1V301.6h-1V303.9h-1V303.4h-1V303.6h-1V303.1h-1V312.9h-1V311.4h-1V329.3h-1V329.7h-1V312.0h-1V314.5h-1V313.0h-1V304.2h-1V317.3h-1V307.2h-1V303.8h-1V309.2h-1V309.8h-1V325.1h-1V322.3h-1V307.8h-1V308.3h-1V309.7h-1V316.6h-1V307.0h-1V307.5h-1V321.0h-1V308.4h-1V330.1h-1V313.8h-1V314.2h-1V305.4h-1V307.3h-1V301.8h-1V299.6h-1V304.5h-1V302.7h-1V307.8h-1V304.3h-1V304.2h-1V302.0h-1V302.5h-1V304.6h-1V318.6h-1V321.7h-1V306.2h-1V307.9h-1V304.5h-1V308.0h-1V332.9h-1V335.9h-1V315.5h-1V310.3h-1V307.8h-1V314.8h-1V301.6h-1V306.8h-1V310.5h-1V300.3h-1V303.9h-1V299.6h-1V300.8h-1V305.8h-1V299.7h-1V310.4h-1V310.7h-1V310.9h-1V305.9h-1V303.2h-1V301.6h-1V301.7h-1V299.5h-1V301.6h-1V316.4h-1V319.4h-1V318.3h-1V315.2h-1V304.9h-1V301.2h-1V307.8h-1V302.9h-1V311.2h-1V312.6h-1V301.7h-1V308.5h-1V312.1h-1V322.7h-1V322.9h-1V305.3h-1V301.1h-1V292.8h-1z" fill="#1b8fd6"/><rect x="178" y="233" width="440" height="4" fill="#8a8a8a"/><rect x="178" y="234" width="440" height="2" fill="#b4b4b4"/><path d="M356.500 124V346" stroke="#fff" stroke-width="1" stroke-dasharray="1.500 1.500"/><path d="M351.500 119.500h10l-5 5.500z" fill="#fff"/><rect x="178" y="346.500" width="468" height="6.500" fill="#414141"/><rect x="178" y="353" width="468" height="18.500" fill="#6f6f6f"/><path d="M356.700 346.300l5.300 6.700h-10.600z" fill="#fff"/><path d="M178.5 353v5" stroke="#d4d4d4" stroke-width="1"/><path d="M195.5 353v5" stroke="#d4d4d4" stroke-width="1"/><path d="M213.5 353v5" stroke="#d4d4d4" stroke-width="1"/><path d="M230.5 353v5" stroke="#d4d4d4" stroke-width="1"/><path d="M247.5 353v5" stroke="#d4d4d4" stroke-width="1"/><path d="M265.5 353v5" stroke="#d4d4d4" stroke-width="1"/><path d="M282.5 353v5" stroke="#d4d4d4" stroke-width="1"/><path d="M299.5 353v5" stroke="#d4d4d4" stroke-width="1"/><path d="M317.5 353v5" stroke="#d4d4d4" stroke-width="1"/><path d="M334.5 353v5" stroke="#d4d4d4" stroke-width="1"/><path d="M351.5 353v5" stroke="#d4d4d4" stroke-width="1"/><path d="M368.5 353v5" stroke="#d4d4d4" stroke-width="1"/><path d="M386.5 353v5" stroke="#d4d4d4" stroke-width="1"/><path d="M403.5 353v5" stroke="#d4d4d4" stroke-width="1"/><path d="M420.5 353v5" stroke="#d4d4d4" stroke-width="1"/><path d="M438.5 353v5" stroke="#d4d4d4" stroke-width="1"/><path d="M455.5 353v5" stroke="#d4d4d4" stroke-width="1"/><path d="M472.5 353v5" stroke="#d4d4d4" stroke-width="1"/><path d="M490.5 353v5" stroke="#d4d4d4" stroke-width="1"/><path d="M507.5 353v5" stroke="#d4d4d4" stroke-width="1"/><path d="M524.5 353v5" stroke="#d4d4d4" stroke-width="1"/><path d="M542.5 353v5" stroke="#d4d4d4" stroke-width="1"/><path d="M559.5 353v5" stroke="#d4d4d4" stroke-width="1"/><path d="M576.5 353v5" stroke="#d4d4d4" stroke-width="1"/><path d="M594.5 353v5" stroke="#d4d4d4" stroke-width="1"/><path d="M611.5 353v5" stroke="#d4d4d4" stroke-width="1"/><path d="M618 128.5h5.500" stroke="#ececec" stroke-width="1"/><path d="M618 147.5h5.500" stroke="#ececec" stroke-width="1"/><path d="M618 163.5h5.500" stroke="#ececec" stroke-width="1"/><path d="M618 178.5h5.500" stroke="#ececec" stroke-width="1"/><path d="M618 194.5h5.500" stroke="#ececec" stroke-width="1"/><path d="M618 210.5h5.500" stroke="#ececec" stroke-width="1"/><path d="M618 229.5h5.500" stroke="#ececec" stroke-width="1"/><path d="M618 134.5h3" stroke="#c8c8c8" stroke-width="1"/><path d="M618 140.5h3" stroke="#c8c8c8" stroke-width="1"/><path d="M618 152.5h3" stroke="#c8c8c8" stroke-width="1"/><path d="M618 156.5h3" stroke="#c8c8c8" stroke-width="1"/><path d="M618 159.5h3" stroke="#c8c8c8" stroke-width="1"/><path d="M618 166.5h3" stroke="#c8c8c8" stroke-width="1"/><path d="M618 169.5h3" stroke="#c8c8c8" stroke-width="1"/><path d="M618 172.5h3" stroke="#c8c8c8" stroke-width="1"/><path d="M618 184.5h3" stroke="#c8c8c8" stroke-width="1"/><path d="M618 187.5h3" stroke="#c8c8c8" stroke-width="1"/><path d="M618 190.5h3" stroke="#c8c8c8" stroke-width="1"/><path d="M618 197.5h3" stroke="#c8c8c8" stroke-width="1"/><path d="M618 200.5h3" stroke="#c8c8c8" stroke-width="1"/><path d="M618 204.5h3" stroke="#c8c8c8" stroke-width="1"/><path d="M618 216.5h3" stroke="#c8c8c8" stroke-width="1"/><path d="M618 222.5h3" stroke="#c8c8c8" stroke-width="1"/><path d="M618 241.5h5.500" stroke="#ececec" stroke-width="1"/><path d="M618 260.5h5.500" stroke="#ececec" stroke-width="1"/><path d="M618 276.5h5.500" stroke="#ececec" stroke-width="1"/><path d="M618 291.5h5.500" stroke="#ececec" stroke-width="1"/><path d="M618 307.5h5.500" stroke="#ececec" stroke-width="1"/><path d="M618 323.5h5.500" stroke="#ececec" stroke-width="1"/><path d="M618 342.5h5.500" stroke="#ececec" stroke-width="1"/><path d="M618 247.5h3" stroke="#c8c8c8" stroke-width="1"/><path d="M618 253.5h3" stroke="#c8c8c8" stroke-width="1"/><path d="M618 265.5h3" stroke="#c8c8c8" stroke-width="1"/><path d="M618 269.5h3" stroke="#c8c8c8" stroke-width="1"/><path d="M618 272.5h3" stroke="#c8c8c8" stroke-width="1"/><path d="M618 279.5h3" stroke="#c8c8c8" stroke-width="1"/><path d="M618 282.5h3" stroke="#c8c8c8" stroke-width="1"/><path d="M618 285.5h3" stroke="#c8c8c8" stroke-width="1"/><path d="M618 297.5h3" stroke="#c8c8c8" stroke-width="1"/><path d="M618 300.5h3" stroke="#c8c8c8" stroke-width="1"/><path d="M618 303.5h3" stroke="#c8c8c8" stroke-width="1"/><path d="M618 310.5h3" stroke="#c8c8c8" stroke-width="1"/><path d="M618 313.5h3" stroke="#c8c8c8" stroke-width="1"/><path d="M618 317.5h3" stroke="#c8c8c8" stroke-width="1"/><path d="M618 329.5h3" stroke="#c8c8c8" stroke-width="1"/><path d="M618 335.5h3" stroke="#c8c8c8" stroke-width="1"/></svg>
<span class="t" style="left:626.5px;top:109.6px;font-size:7.5px;line-height:10px;color:#dcdcdc;transform:scaleX(0.872);">dB</span>
<span class="t" style="left:626.8px;top:124.5px;font-size:7.5px;line-height:10px;color:#dcdcdc;transform:scaleX(0.800);">0</span>
<span class="t" style="left:625.7px;top:143.0px;font-size:7.5px;line-height:10px;color:#dcdcdc;transform:scaleX(1.000);">-4</span>
<span class="t" style="left:625.7px;top:158.5px;font-size:7.5px;line-height:10px;color:#dcdcdc;transform:scaleX(1.003);">-10</span>
<span class="t" style="left:625.7px;top:173.5px;font-size:7.5px;line-height:10px;color:#dcdcdc;transform:scaleX(1.307);">-∞</span>
<span class="t" style="left:625.7px;top:190.5px;font-size:7.5px;line-height:10px;color:#dcdcdc;transform:scaleX(1.003);">-10</span>
<span class="t" style="left:625.7px;top:206.0px;font-size:7.5px;line-height:10px;color:#dcdcdc;transform:scaleX(1.000);">-4</span>
<span class="t" style="left:626.8px;top:224.5px;font-size:7.5px;line-height:10px;color:#dcdcdc;transform:scaleX(0.800);">0</span>
<span class="t" style="left:626.8px;top:237.5px;font-size:7.5px;line-height:10px;color:#dcdcdc;transform:scaleX(0.800);">0</span>
<span class="t" style="left:625.7px;top:256.0px;font-size:7.5px;line-height:10px;color:#dcdcdc;transform:scaleX(1.000);">-4</span>
<span class="t" style="left:625.7px;top:271.5px;font-size:7.5px;line-height:10px;color:#dcdcdc;transform:scaleX(1.003);">-10</span>
<span class="t" style="left:625.7px;top:286.5px;font-size:7.5px;line-height:10px;color:#dcdcdc;transform:scaleX(1.307);">-∞</span>
<span class="t" style="left:625.7px;top:303.5px;font-size:7.5px;line-height:10px;color:#dcdcdc;transform:scaleX(1.003);">-10</span>
<span class="t" style="left:625.7px;top:319.0px;font-size:7.5px;line-height:10px;color:#dcdcdc;transform:scaleX(1.000);">-4</span>
<span class="t" style="left:626.8px;top:337.5px;font-size:7.5px;line-height:10px;color:#dcdcdc;transform:scaleX(0.800);">0</span>
<span class="t" style="left:178.8px;top:360.5px;font-size:7.5px;line-height:10px;color:#d4d4d4;transform:scaleX(0.735);">hms</span>
<span class="t" style="left:206.8px;top:360.5px;font-size:7.5px;line-height:10px;color:#d4d4d4;transform:scaleX(0.860);">0:02</span>
<span class="t" style="left:241.5px;top:360.5px;font-size:7.5px;line-height:10px;color:#d4d4d4;transform:scaleX(0.860);">0:04</span>
<span class="t" style="left:276.1px;top:360.5px;font-size:7.5px;line-height:10px;color:#d4d4d4;transform:scaleX(0.860);">0:06</span>
<span class="t" style="left:310.7px;top:360.5px;font-size:7.5px;line-height:10px;color:#d4d4d4;transform:scaleX(0.860);">0:08</span>
<span class="t" style="left:345.4px;top:360.5px;font-size:7.5px;line-height:10px;color:#d4d4d4;transform:scaleX(0.860);">0:10</span>
<span class="t" style="left:380.0px;top:360.5px;font-size:7.5px;line-height:10px;color:#d4d4d4;transform:scaleX(0.860);">0:12</span>
<span class="t" style="left:414.6px;top:360.5px;font-size:7.5px;line-height:10px;color:#d4d4d4;transform:scaleX(0.860);">0:14</span>
<span class="t" style="left:449.2px;top:360.5px;font-size:7.5px;line-height:10px;color:#d4d4d4;transform:scaleX(0.860);">0:16</span>
<span class="t" style="left:483.9px;top:360.5px;font-size:7.5px;line-height:10px;color:#d4d4d4;transform:scaleX(0.860);">0:18</span>
<span class="t" style="left:518.5px;top:360.5px;font-size:7.5px;line-height:10px;color:#d4d4d4;transform:scaleX(0.860);">0:20</span>
<span class="t" style="left:553.1px;top:360.5px;font-size:7.5px;line-height:10px;color:#d4d4d4;transform:scaleX(0.860);">0:22</span>
<span class="t" style="left:587.8px;top:360.5px;font-size:7.5px;line-height:10px;color:#d4d4d4;transform:scaleX(0.860);">0:24</span>
<i class="a" style="left:176px;top:372px;width:470px;height:58px;background:#efefef"></i>
<i class="a" style="left:363.500px;top:373px;width:1px;height:54px;background:#b9b9b9"></i>
<i class="a" style="left:443.500px;top:373px;width:1px;height:54px;background:#bcbcbc"></i>
<i class="a" style="left:364.500px;top:373px;width:79px;height:54px;background:#f5f5f5"></i>
<svg class="a" style="left:0;top:0" width="650" height="448" viewBox="0 0 650 448"><defs><linearGradient id="btn" x1="0" y1="0" x2="0" y2="1"><stop offset="0" stop-color="#f7f7f7"/><stop offset="1" stop-color="#e2e2e2"/></linearGradient></defs><rect x="182.3" y="381.5" width="94.3" height="17.2" rx="1.500" fill="url(#btn)" stroke="#a8a8a8" stroke-width="1"/><path d="M183.3 398.7H275.6" stroke="#8c8c8c" stroke-width="1"/><path d="M201.2 382.0V398.2" stroke="#c4c4c4" stroke-width="1"/><path d="M202.2 382.0V398.2" stroke="#fafafa" stroke-width="1"/><path d="M220.0 382.0V398.2" stroke="#c4c4c4" stroke-width="1"/><path d="M221.0 382.0V398.2" stroke="#fafafa" stroke-width="1"/><path d="M238.9 382.0V398.2" stroke="#c4c4c4" stroke-width="1"/><path d="M239.9 382.0V398.2" stroke="#fafafa" stroke-width="1"/><path d="M257.7 382.0V398.2" stroke="#c4c4c4" stroke-width="1"/><path d="M258.7 382.0V398.2" stroke="#fafafa" stroke-width="1"/><rect x="182.3" y="401" width="94.3" height="17.3" rx="1.500" fill="url(#btn)" stroke="#a8a8a8" stroke-width="1"/><path d="M183.3 418.3H275.6" stroke="#8c8c8c" stroke-width="1"/><path d="M201.2 401.5V417.8" stroke="#c4c4c4" stroke-width="1"/><path d="M202.2 401.5V417.8" stroke="#fafafa" stroke-width="1"/><path d="M220.0 401.5V417.8" stroke="#c4c4c4" stroke-width="1"/><path d="M221.0 401.5V417.8" stroke="#fafafa" stroke-width="1"/><path d="M238.9 401.5V417.8" stroke="#c4c4c4" stroke-width="1"/><path d="M239.9 401.5V417.8" stroke="#fafafa" stroke-width="1"/><path d="M257.7 401.5V417.8" stroke="#c4c4c4" stroke-width="1"/><path d="M258.7 401.5V417.8" stroke="#fafafa" stroke-width="1"/><path d="M188.23000000000002 386l7.500 4-7.500 4z" fill="#4a4a4a"/><path d="M206.59000000000003 388h8v5h-8zM209.59000000000003 386h3v2" fill="none" stroke="#4a4a4a" stroke-width="1.200"/><path d="M224.95000000000002 386l7 4-7 4z" fill="#4a4a4a"/><path d="M233.45000000000002 386v8" stroke="#4a4a4a" stroke-width="1.500"/><path d="M248.31 386.5v7l-5-3.500zM253.31 386.5v7l-5-3.500z" fill="#4a4a4a"/><path d="M262.17 386.5v7l5-3.500zM267.17 386.5v7l5-3.500z" fill="#4a4a4a"/><rect x="189.03000000000003" y="406.3" width="5.400" height="5.400" fill="#5a5a5a" stroke="#333" stroke-width=".7"/><path d="M208.89000000000004 406v6M212.29000000000002 406v6" stroke="#333" stroke-width="1.500"/><circle cx="229.45000000000002" cy="409" r="3.400" fill="#800000"/><path d="M248.31 405.5v7l-5-3.500zM253.31 405.5v7l-5-3.500z" fill="#4a4a4a"/><path d="M244.31 404.5h-2v9h2" fill="none" stroke="#4a4a4a" stroke-width="1.100"/><path d="M261.17 405.5v7l5-3.500zM266.17 405.5v7l5-3.500z" fill="#4a4a4a"/><path d="M271.17 404.5h2v9h-2" fill="none" stroke="#4a4a4a" stroke-width="1.100"/><rect x="282.8" y="381.5" width="74.7" height="17.2" rx="1.500" fill="url(#btn)" stroke="#a8a8a8" stroke-width="1"/><path d="M283.8 398.7H356.5" stroke="#8c8c8c" stroke-width="1"/><path d="M301.5 382.0V398.2" stroke="#c4c4c4" stroke-width="1"/><path d="M302.5 382.0V398.2" stroke="#fafafa" stroke-width="1"/><path d="M320.1 382.0V398.2" stroke="#c4c4c4" stroke-width="1"/><path d="M321.1 382.0V398.2" stroke="#fafafa" stroke-width="1"/><path d="M338.8 382.0V398.2" stroke="#c4c4c4" stroke-width="1"/><path d="M339.8 382.0V398.2" stroke="#fafafa" stroke-width="1"/><rect x="282.8" y="401" width="74.7" height="17.3" rx="1.500" fill="url(#btn)" stroke="#a8a8a8" stroke-width="1"/><path d="M283.8 418.3H356.5" stroke="#8c8c8c" stroke-width="1"/><path d="M301.5 401.5V417.8" stroke="#c4c4c4" stroke-width="1"/><path d="M302.5 401.5V417.8" stroke="#fafafa" stroke-width="1"/><path d="M320.1 401.5V417.8" stroke="#c4c4c4" stroke-width="1"/><path d="M321.1 401.5V417.8" stroke="#fafafa" stroke-width="1"/><path d="M338.8 401.5V417.8" stroke="#c4c4c4" stroke-width="1"/><path d="M339.8 401.5V417.8" stroke="#fafafa" stroke-width="1"/><circle cx="290.6375" cy="388.5" r="3.100" fill="#f6f6f6" stroke="#3c3c3c" stroke-width="1.300"/><path d="M292.9375 390.8l3.300 3.300" stroke="#3c3c3c" stroke-width="2" stroke-linecap="round"/><path d="M288.9375 388.5h3.400M290.6375 386.8v3.400" stroke="#333" stroke-width=".9"/><circle cx="309.3125" cy="388.5" r="3.100" fill="#f6f6f6" stroke="#3c3c3c" stroke-width="1.300"/><path d="M311.6125 390.8l3.300 3.300" stroke="#3c3c3c" stroke-width="2" stroke-linecap="round"/><path d="M307.6125 388.5h3.400" stroke="#333" stroke-width=".9"/><circle cx="328.4875" cy="387.5" r="3.100" fill="#f6f6f6" stroke="#3c3c3c" stroke-width="1.300"/><path d="M330.7875 389.8l3.300 3.300" stroke="#3c3c3c" stroke-width="2" stroke-linecap="round"/><path d="M324.4875 394h1.500M326.6875 394h1.500M328.8875 394h1.500" stroke="#333" stroke-width="1.400"/><circle cx="349.1625" cy="388.5" r="3.100" fill="#f6f6f6" stroke="#3c3c3c" stroke-width="1.300"/><path d="M351.46250000000003 390.8l3.300 3.300" stroke="#3c3c3c" stroke-width="2" stroke-linecap="round"/><path d="M342.6625 385.5v8" stroke="#333" stroke-width="1"/><path d="M340.8625 387.5l1.800-2.500 1.800 2.500zM340.8625 391.5l1.800 2.500 1.800-2.500z" fill="#333"/><circle cx="292.1375" cy="407.5" r="3.100" fill="#f6f6f6" stroke="#3c3c3c" stroke-width="1.300"/><path d="M294.4375 409.8l3.300 3.300" stroke="#3c3c3c" stroke-width="2" stroke-linecap="round"/><path d="M287.1375 404h-2v10h2" fill="none" stroke="#333" stroke-width="1.100"/><circle cx="309.3125" cy="407.5" r="3.100" fill="#f6f6f6" stroke="#3c3c3c" stroke-width="1.300"/><path d="M311.6125 409.8l3.300 3.300" stroke="#3c3c3c" stroke-width="2" stroke-linecap="round"/><path d="M307.2125 407h4.200v1.500h-4.200z" fill="#333"/><path d="M309.3125 405v2" stroke="#333"/><circle cx="329.4875" cy="407.5" r="3.100" fill="#f6f6f6" stroke="#3c3c3c" stroke-width="1.300"/><path d="M327.1875 409.8l-3.300 3.300" stroke="#3c3c3c" stroke-width="2" stroke-linecap="round"/><path d="M334.4875 404h2v10h-2" fill="none" stroke="#333" stroke-width="1.100"/><circle cx="349.1625" cy="407.5" r="3.100" fill="#f6f6f6" stroke="#3c3c3c" stroke-width="1.300"/><path d="M351.46250000000003 409.8l3.300 3.300" stroke="#3c3c3c" stroke-width="2" stroke-linecap="round"/><path d="M342.6625 407.5v3" stroke="#333" stroke-width="1"/><path d="M340.8625 404.5l1.800 2.500 1.800-2.500zM340.8625 413.5l1.800-2.500 1.800 2.500z" fill="#333"/></svg>
<span class="t" style="left:371.0px;top:391.3px;font-size:13.5px;line-height:18px;color:#111;transform:scaleX(0.843);-webkit-text-stroke:.3px #111;">00:00:10.273</span>
<span class="t" style="left:448.3px;top:388.8px;font-size:9px;line-height:12px;color:#000;font-weight:500;transform:scaleX(0.908);-webkit-text-stroke:.1px #000;">選択範囲</span>
<span class="t" style="left:462.7px;top:405.8px;font-size:9px;line-height:12px;color:#000;font-weight:500;transform:scaleX(0.677);-webkit-text-stroke:.1px #000;">ビュー</span>
<i class="a" style="left:488px;top:405.500px;width:49.7px;height:13.300px;background:#fff;border:1px solid #a9a9a9"></i>
<span class="t" style="left:491.0px;top:406.8px;font-size:8px;line-height:10px;color:#111;transform:scaleX(0.935);-webkit-text-stroke:.15px #111;">00:00:00.000</span>
<i class="a" style="left:488px;top:389.300px;width:49.7px;height:12.500px;background:#ffffc8;border:1px solid #a9a9a9"></i>
<i class="a" style="left:539.5px;top:405.500px;width:49.2px;height:13.300px;background:#fff;border:1px solid #a9a9a9"></i>
<span class="t" style="left:542.5px;top:406.8px;font-size:8px;line-height:10px;color:#111;transform:scaleX(0.925);-webkit-text-stroke:.15px #111;">00:00:25.364</span>
<i class="a" style="left:539.5px;top:389.300px;width:49.2px;height:12.500px;background:#fff;border:1px solid #a9a9a9"></i>
<i class="a" style="left:590.5px;top:405.500px;width:49.8px;height:13.300px;background:#fff;border:1px solid #a9a9a9"></i>
<span class="t" style="left:593.5px;top:406.8px;font-size:8px;line-height:10px;color:#111;transform:scaleX(0.937);-webkit-text-stroke:.15px #111;">00:00:25.364</span>
<i class="a" style="left:590.5px;top:389.300px;width:49.8px;height:12.500px;background:#fff;border:1px solid #a9a9a9"></i>
<span class="t" style="left:489.3px;top:376.8px;font-size:8.5px;line-height:11px;color:#000;font-weight:700;transform:scaleX(0.740);">F</span>
<i class="a" style="left:0;top:428px;width:650px;height:20px;background:linear-gradient(#f4f4f4 0,#ececec 3px,#dedede 15px)"></i>
<i class="a" style="left:294.5px;top:431px;width:1px;height:13px;background:#b5b5b5;box-shadow:1px 0 0 #fbfbfb"></i>
<i class="a" style="left:512.5px;top:431px;width:1px;height:13px;background:#b5b5b5;box-shadow:1px 0 0 #fbfbfb"></i>
<i class="a" style="left:580px;top:431px;width:1px;height:13px;background:#b5b5b5;box-shadow:1px 0 0 #fbfbfb"></i>
<i class="a" style="left:643.5px;top:431px;width:1px;height:13px;background:#b5b5b5;box-shadow:1px 0 0 #fbfbfb"></i>
<span class="t" style="left:301.5px;top:431.8px;font-size:8.5px;line-height:11px;color:#111;transform:scaleX(0.790);">44100 Hz, 16-ビット, 2チャンネル</span>
<span class="t" style="left:518.7px;top:431.8px;font-size:8.5px;line-height:11px;color:#111;transform:scaleX(0.867);">4.267Mb</span>
<span class="t" style="left:585.5px;top:431.8px;font-size:8.5px;line-height:11px;color:#111;transform:scaleX(0.908);">00:00:25.364</span>
<div class="a" style="left:378.300px;top:141.500px;width:167.500px;height:227.500px;background:#f0f0f0;border:1px solid #9d9d9d;box-shadow:2px 2px 3px rgba(0,0,0,.45)"></div>
<i class="a" style="left:398px;top:143.500px;width:1px;height:224px;background:#dadada;box-shadow:1px 0 0 #fff"></i>
<i class="a" style="left:400px;top:177.0px;width:144px;height:1px;background:#d4d4d4;box-shadow:0 1px 0 #fff"></i>
<i class="a" style="left:400px;top:194.5px;width:144px;height:1px;background:#d4d4d4;box-shadow:0 1px 0 #fff"></i>
<i class="a" style="left:400px;top:230.0px;width:144px;height:1px;background:#d4d4d4;box-shadow:0 1px 0 #fff"></i>
<i class="a" style="left:400px;top:316.0px;width:144px;height:1px;background:#d4d4d4;box-shadow:0 1px 0 #fff"></i>
<i class="a" style="left:400px;top:350.5px;width:144px;height:1px;background:#d4d4d4;box-shadow:0 1px 0 #fff"></i>
<i class="a" style="left:379.500px;top:298px;width:165.500px;height:16px;background:linear-gradient(#d9e3f2,#bfcde6);border:1px solid #a9b9d6;border-radius:2px"></i>
<span class="t" style="left:401.6px;top:145.8px;font-size:9px;line-height:12px;color:#000;font-weight:500;transform:scaleX(0.824);-webkit-text-stroke:.1px #000;">すべて選択</span>
<span class="t" style="left:510.5px;top:146.3px;font-size:8.5px;line-height:11px;color:#222;transform:scaleX(0.881);">Ctrl+A</span>
<span class="t" style="left:401.6px;top:162.3px;font-size:9px;line-height:12px;color:#000;font-weight:500;transform:scaleX(0.890);-webkit-text-stroke:.1px #000;">表示範囲の選択</span>
<span class="t" style="left:401.6px;top:181.0px;font-size:9px;line-height:12px;color:#8d8d8d;transform:scaleX(0.835);">名前を付けて、選択範囲を保存する</span>
<span class="t" style="left:401.6px;top:199.0px;font-size:9px;line-height:12px;color:#8d8d8d;transform:scaleX(0.911);">削除</span>
<span class="t" style="left:522.0px;top:199.5px;font-size:8.5px;line-height:11px;color:#777;transform:scaleX(0.762);">Del</span>
<span class="t" style="left:401.6px;top:216.3px;font-size:9px;line-height:12px;color:#8d8d8d;transform:scaleX(0.779);">選択範囲にトリム</span>
<span class="t" style="left:510.5px;top:216.8px;font-size:8.5px;line-height:11px;color:#777;transform:scaleX(0.919);">Ctrl+T</span>
<span class="t" style="left:401.6px;top:234.0px;font-size:9px;line-height:12px;color:#8d8d8d;transform:scaleX(0.669);">カット</span>
<span class="t" style="left:510.5px;top:234.5px;font-size:8.5px;line-height:11px;color:#777;transform:scaleX(0.881);">Ctrl+X</span>
<span class="t" style="left:400.9px;top:251.0px;font-size:9px;line-height:12px;color:#8d8d8d;transform:scaleX(0.669);">コピー</span>
<span class="t" style="left:510.5px;top:251.5px;font-size:8.5px;line-height:11px;color:#777;transform:scaleX(0.881);">Ctrl+C</span>
<span class="t" style="left:401.6px;top:267.3px;font-size:9px;line-height:12px;color:#8d8d8d;transform:scaleX(0.730);">新規にコピー</span>
<span class="t" style="left:401.6px;top:283.7px;font-size:9px;line-height:12px;color:#8d8d8d;transform:scaleX(0.803);">貼り付け</span>
<span class="t" style="left:510.5px;top:284.2px;font-size:8.5px;line-height:11px;color:#777;transform:scaleX(0.881);">Ctrl+V</span>
<span class="t" style="left:400.9px;top:300.3px;font-size:9px;line-height:12px;color:#000;font-weight:500;transform:scaleX(0.709);-webkit-text-stroke:.1px #000;">ミックスを貼り付ける</span>
<span class="t" style="left:401.6px;top:319.0px;font-size:9px;line-height:12px;color:#000;font-weight:500;transform:scaleX(0.784);-webkit-text-stroke:.1px #000;">マーカーの追加</span>
<span class="t" style="left:401.6px;top:336.0px;font-size:9px;line-height:12px;color:#8d8d8d;transform:scaleX(0.787);">マーカーでファイルを分割する</span>
<span class="t" style="left:401.6px;top:353.5px;font-size:9px;line-height:12px;color:#8d8d8d;transform:scaleX(0.787);">選択範囲をミックスに追加する</span>
<svg class="a" style="left:0;top:0" width="650" height="448" viewBox="0 0 650 448"><defs><filter id="sh97" x="-10%" y="-10%" width="125%" height="130%"><feGaussianBlur stdDeviation="1.600"/></filter></defs><g filter="url(#sh97)" opacity=".45"><rect x="99.5" y="132" width="161.5" height="66" rx="8" fill="#000"/></g><path d="M99 134.5L79.5 139.5L99 157z" fill="#215d98" stroke="#fff" stroke-width="2" stroke-linejoin="round"/><rect x="97.5" y="129" width="161.5" height="66" rx="8" fill="#215d98" stroke="#fff" stroke-width="2"/><path d="M99 134.5L79.5 139.5L99 157z" fill="#215d98"/></svg>
<span class="t" style="left:100.9px;top:152.5px;font-size:13.5px;line-height:18px;color:#fff;font-weight:700;transform:scaleX(0.791);">ビデオをダブルクリックします</span>
<svg class="a" style="left:0;top:0" width="650" height="448" viewBox="0 0 650 448"><defs><filter id="sh217" x="-10%" y="-10%" width="125%" height="130%"><feGaussianBlur stdDeviation="1.600"/></filter></defs><g filter="url(#sh217)" opacity=".45"><rect x="219.8" y="275.5" width="118.2" height="68.5" rx="8" fill="#000"/></g><path d="M335 283.5L356 282L335 303z" fill="#215d98" stroke="#fff" stroke-width="2" stroke-linejoin="round"/><rect x="217.8" y="272.5" width="118.2" height="68.5" rx="8" fill="#215d98" stroke="#fff" stroke-width="2"/><path d="M335 283.5L356 282L335 303z" fill="#215d98"/></svg>
<span class="t" style="left:227.7px;top:287.8px;font-size:13.5px;line-height:18px;color:#fff;font-weight:700;transform:scaleX(0.893);">カソルを配置する</span>
<span class="t" style="left:224.0px;top:305.0px;font-size:13.5px;line-height:18px;color:#fff;font-weight:700;transform:scaleX(0.769);">ためにクリックします</span>
<svg class="a" style="left:0;top:0" width="650" height="448" viewBox="0 0 650 448"><defs><filter id="sh492" x="-10%" y="-10%" width="125%" height="130%"><feGaussianBlur stdDeviation="1.600"/></filter></defs><g filter="url(#sh492)" opacity=".45"><rect x="494.4" y="328.4" width="152.6" height="80" rx="8" fill="#000"/></g><path d="M500.5 327L502.4 306.5L520 327z" fill="#215d98" stroke="#fff" stroke-width="2" stroke-linejoin="round"/><rect x="492.4" y="325.4" width="152.6" height="80" rx="8" fill="#215d98" stroke="#fff" stroke-width="2"/><path d="M500.5 327L502.4 306.5L520 327z" fill="#215d98"/></svg>
<span class="t" style="left:526.0px;top:340.6px;font-size:13.5px;line-height:18px;color:#fff;font-weight:700;transform:scaleX(0.810);">右クリックして、</span>
<span class="t" style="left:507.2px;top:357.5px;font-size:13.5px;line-height:18px;color:#fff;font-weight:700;transform:scaleX(0.799);">ミックスを貼り付けする</span>
<span class="t" style="left:489.0px;top:357.5px;font-size:13.5px;line-height:18px;color:#fff;font-weight:700;transform:scaleX(1.167);">「</span>
<span class="t" style="left:628.3px;top:357.5px;font-size:13.5px;line-height:18px;color:#fff;font-weight:700;transform:scaleX(1.340);">」</span>
<span class="t" style="left:531.6px;top:374.5px;font-size:13.5px;line-height:18px;color:#fff;font-weight:700;transform:scaleX(0.899);">を選択します</span>
<i class="a" style="left:0;top:21px;width:4.500px;height:427px;background:#d2d2d2"></i>
<i class="a" style="left:0;top:21px;width:1px;height:427px;background:#b4b4b4"></i>
<i class="a" style="left:.8px;top:21px;width:2.200px;height:424px;background:linear-gradient(#b8b8b8 0,#a0a0a0 40px,#767676 150px,#767676 380px,#8a8a8a)"></i>
<i class="a" style="left:645.500px;top:21px;width:4.500px;height:427px;background:linear-gradient(90deg,#a4a4a4 0,#a4a4a4 2px,#858585 2px,#858585 3.500px,#c4c4c4 3.500px)"></i><i class="a" style="left:646.500px;top:3px;width:1.500px;height:18px;background:#8e8e8e"></i><i class="a" style="left:648px;top:2px;width:2px;height:19px;background:#d8d8d8"></i><i class="a" style="left:0;top:0;width:650px;height:1px;background:#b4b4b4"></i><i class="a" style="left:1px;top:3px;width:1.300px;height:18px;background:#777"></i>
<i class="a" style="left:0;top:443.700px;width:650px;height:1.300px;background:#8c8c8c"></i>
<i class="a" style="left:0;top:445px;width:650px;height:3px;background:#cecece"></i>
</div>
</body>
</html>
